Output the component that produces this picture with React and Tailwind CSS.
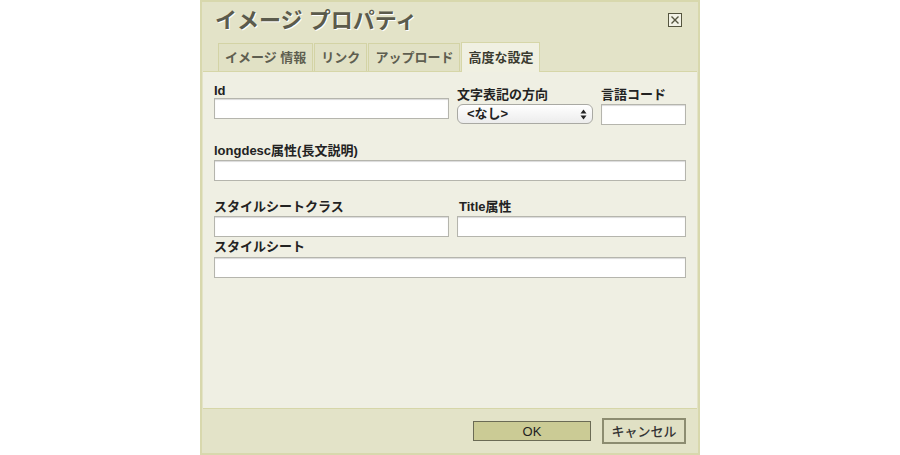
import React from 'react'

const font = { fontFamily: '"Liberation Sans", "Noto Sans CJK JP", sans-serif' }

const Field = ({ label, className = '', inputClass = 'h-[21px]' }) => (
  <div className={`flex flex-col ${className}`}>
    <label className="text-[13px] leading-[15px] font-semibold text-[#222]">{label}</label>
    <input className={`${inputClass} w-full bg-white border border-[#b5b5ad] shadow-[inset_0_1px_1px_rgba(0,0,0,0.15)] outline-none`} />
  </div>
)

export default function App() {
  const tabs = ['イメージ 情報', 'リンク', 'アップロード', '高度な設定']

  return (
    <div className="w-[900px] h-[455px] bg-white flex justify-center" style={font}>
      <div className="w-[500px] h-[455px] bg-[#e3e3c8] border-2 border-[#d8d8ad] flex flex-col">
        {/* Header */}
        <div className="h-[40px] flex items-start justify-between pl-[13px] pr-[16px] pt-[5px]">
          <h1 className="text-[22px] leading-[28px] font-bold text-[#5b5b4c] [text-shadow:1px_1px_0_#fff]">
            イメージ プロパティ
          </h1>
          <div className="mt-[6px] w-[14px] h-[14px] border border-[#55553f] bg-[#f2f2e6] flex items-center justify-center">
            <svg width="10" height="10" viewBox="0 0 10 10">
              <path d="M1.5 1.5 L8.5 8.5 M8.5 1.5 L1.5 8.5" stroke="#55553f" strokeWidth="1.4" />
            </svg>
          </div>
        </div>

        {/* Tabs */}
        <div className="h-[29px] flex items-end pl-[16px] gap-[1px]">
          {tabs.map((t, i) =>
            i === 3 ? (
              <div
                key={t}
                className="h-[30px] px-[6px] flex items-center bg-[#f0f0e2] border border-b-0 border-[#d6d6a8] text-[13px] font-semibold text-[#3b3b30] -mb-[1px] relative z-10"
              >
                {t}
              </div>
            ) : (
              <div
                key={t}
                className="h-[28px] px-[6px] flex items-center bg-[#e1e1c5] border border-b-0 border-[#d3d3a5] text-[13px] font-semibold text-[#5e5e50]"
              >
                {t}
              </div>
            )
          )}
        </div>

        {/* Content */}
        <div className="flex-1 bg-[#efefe3] border-t border-b border-[#d6d6a8] mx-[1px] px-[11px] pt-[11px]">
          <div className="flex items-start gap-[8px]">
            <Field label="Id" className="w-[235px]" />
            <div className="w-[136px] flex flex-col pt-[4px]">
              <label className="text-[13px] leading-[15px] font-semibold text-[#222]">文字表記の方向</label>
              <div className="mt-[2px] h-[20px] rounded-[6px] border border-[#a9a9a3] bg-gradient-to-b from-white to-[#ececec] flex items-center justify-between pl-[9px] pr-[5px]">
                <span className="text-[13px] font-semibold text-[#222]">&lt;なし&gt;</span>
                <svg width="7" height="11" viewBox="0 0 7 11">
                  <path d="M0.5 4.5 L3.5 0.5 L6.5 4.5 Z M0.5 6.5 L3.5 10.5 L6.5 6.5 Z" fill="#222" />
                </svg>
              </div>
            </div>
            <div className="w-[85px] flex flex-col pt-[4px]">
              <label className="text-[13px] leading-[15px] font-semibold text-[#222]">言語コード</label>
              <input className="mt-[2px] h-[21px] w-full bg-white border border-[#b5b5ad] shadow-[inset_0_1px_1px_rgba(0,0,0,0.15)] outline-none" />
            </div>
          </div>

          <Field label="longdesc属性(長文説明)" className="mt-[18px] [&>label]:mb-[2px]" />

          <div className="mt-[18px] flex gap-[8px]">
            <Field label="スタイルシートクラス" className="w-[235px] [&>label]:mb-[2px]" />
            <Field label="Title属性" className="flex-1 [&>label]:mb-[2px] [&>label]:pl-[2px]" />
          </div>

          <Field label="スタイルシート" className="mt-[2px] [&>label]:mb-[3px]" />
        </div>

        {/* Footer */}
        <div className="h-[44px] flex items-center justify-end gap-[11px] pr-[12px]">
          <button className="w-[118px] h-[20px] bg-[#cbcb95] border border-[#6b6b55] text-[13px] text-[#222] font-medium leading-none">
            OK
          </button>
          <button className="w-[84px] h-[26px] bg-[#e0e0c4] border-2 border-[#8c8c70] text-[13px] text-[#333] font-medium leading-none">
            キャンセル
          </button>
        </div>
      </div>
    </div>
  )
}
